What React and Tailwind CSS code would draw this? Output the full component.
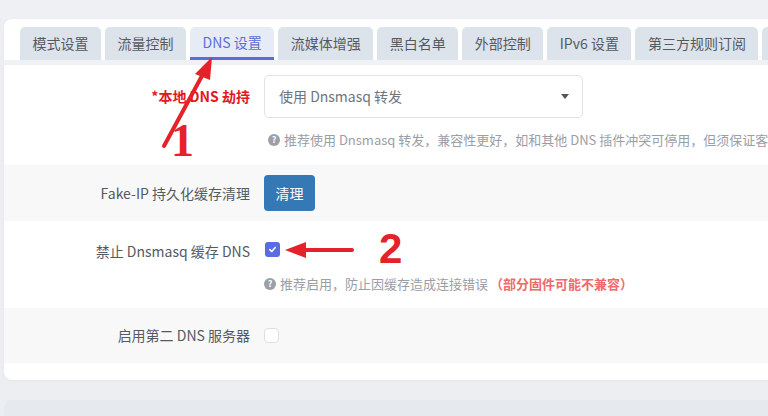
const tabs = ['模式设置', '流量控制', 'DNS 设置', '流媒体增强', '黑白名单', '外部控制', 'IPv6 设置', '第三方规则订阅', '其他设置'];

const Help = ({ children }) => (
  <div className="flex items-center gap-1 text-[13px] text-[#9a9ea6] whitespace-nowrap">
    <span className="shrink-0 flex items-center justify-center w-[12px] h-[12px] rounded-full bg-[#9aa0a8] text-white text-[9px] font-bold leading-none">?</span>
    <span className="shrink-0">{children}</span>
  </div>
);

const Label = ({ children, className = '' }) => (
  <div className={`w-[246px] shrink-0 text-right text-[14px] ${className}`}>{children}</div>
);

export default function App() {
  return (
    <div
      className="relative w-[768px] h-[416px] overflow-hidden bg-[#eceef1]"
      style={{ fontFamily: '"Noto Sans CJK SC", "Noto Sans", sans-serif' }}
    >
      <div className="h-[19px] bg-[#eef0f3]" />
      <div className="ml-[4px] w-[800px] h-[361px] bg-white rounded-[8px] overflow-hidden shadow-[0_1px_3px_rgba(0,0,0,0.04)]">
        {/* tabs */}
        <div className="pt-[8px] pl-[16px] border-b-[5px] border-[#eff1f5]">
          <div className="flex gap-[4px]">
            {tabs.map((t, i) => (
              <div
                key={t}
                className={
                  i === 2
                    ? 'h-[33px] px-[12.5px] flex items-center rounded-t-[5px] bg-[#e7ebf5] text-[#5b6fd4] text-[14px] border-b-[3px] border-[#5b6ed6] whitespace-nowrap'
                    : 'h-[33px] px-[12.5px] flex items-center rounded-t-[5px] bg-[#dde3ea] text-[#555a62] text-[14px] whitespace-nowrap'
                }
              >
                {t}
              </div>
            ))}
          </div>
        </div>

        {/* row 1 */}
        <div className="h-[100px] pt-[10px] flex">
          <Label className="pt-[11px] text-[#e2181f] font-bold">*本地 DNS 劫持</Label>
          <div className="pl-[14px] w-[640px]">
            <div className="w-[319px] h-[43px] border border-[#dfe2e6] rounded-[5px] flex items-center justify-between pl-[14px] pr-[13px] text-[14px] text-[#6f747c]">
              <span>使用 Dnsmasq 转发</span>
              <span className="w-0 h-0 border-l-[4px] border-r-[4px] border-t-[5px] border-l-transparent border-r-transparent border-t-[#555]" />
            </div>
            <div className="mt-[12px] pl-[4px]">
              <Help>推荐使用 Dnsmasq 转发，兼容性更好，如和其他 DNS 插件冲突可停用，但须保证客户端可正常使用</Help>
            </div>
          </div>
        </div>

        {/* row 2 */}
        <div className="h-[56px] bg-[#f8f8f9] flex items-center">
          <Label className="text-[#555a62]">Fake-IP 持久化缓存清理</Label>
          <div className="pl-[14px]">
            <div className="w-[51px] h-[36px] rounded-[4px] bg-[#3478b6] text-white text-[14px] flex items-center justify-center">清理</div>
          </div>
        </div>

        {/* row 3 */}
        <div className="h-[87px] flex pt-[20px]">
          <Label className="text-[#555a62]">禁止 Dnsmasq 缓存 DNS</Label>
          <div className="pl-[15px]">
            <div className="mt-[1px] w-[15px] h-[15px] rounded-[3px] bg-[#5a6de0] flex items-center justify-center">
              <svg width="9" height="9" viewBox="0 0 10 10" fill="none">
                <path d="M2 5.2 L4.2 7.2 L8 2.8" stroke="white" strokeWidth="1.8" strokeLinecap="round" strokeLinejoin="round" />
              </svg>
            </div>
            <div className="mt-[17px] -ml-[1px]">
              <Help>
                推荐启用，防止因缓存造成连接错误<span className="ml-[2px] text-[#f06a6a] font-bold">（部分固件可能不兼容）</span>
              </Help>
            </div>
          </div>
        </div>

        {/* row 4 */}
        <div className="h-[55px] bg-[#f8f8f9] flex items-center">
          <Label className="text-[#555a62]">启用第二 DNS 服务器</Label>
          <div className="pl-[14px]">
            <div className="w-[15px] h-[15px] rounded-[4px] border border-[#dcdfe3] bg-white" />
          </div>
        </div>
      </div>

      <div className="mt-[20px] ml-[4px] w-[800px] h-[40px] rounded-[8px] bg-[#e6e9ed]" />

      {/* annotations */}
      <svg className="absolute left-0 top-0 pointer-events-none" width="768" height="416">
        <line x1="164" y1="146" x2="203" y2="74" stroke="#e5222a" strokeWidth="4" strokeLinecap="round" />
        <polygon points="212,57 195,74 210,80" fill="#e5222a" />
        <line x1="352" y1="250" x2="300" y2="250" stroke="#e5222a" strokeWidth="4" strokeLinecap="round" />
        <polygon points="285,250 306,242 306,258" fill="#e5222a" />
      </svg>
      <div className="absolute left-[171px] top-[118px] text-[46px] leading-none font-bold text-[#e5222a]" style={{ fontFamily: '"Liberation Serif", serif' }}>1</div>
      <div className="absolute left-[379px] top-[228px] text-[42px] leading-none font-bold text-[#e5222a]" style={{ fontFamily: '"Liberation Sans", sans-serif' }}>2</div>
    </div>
  );
}
